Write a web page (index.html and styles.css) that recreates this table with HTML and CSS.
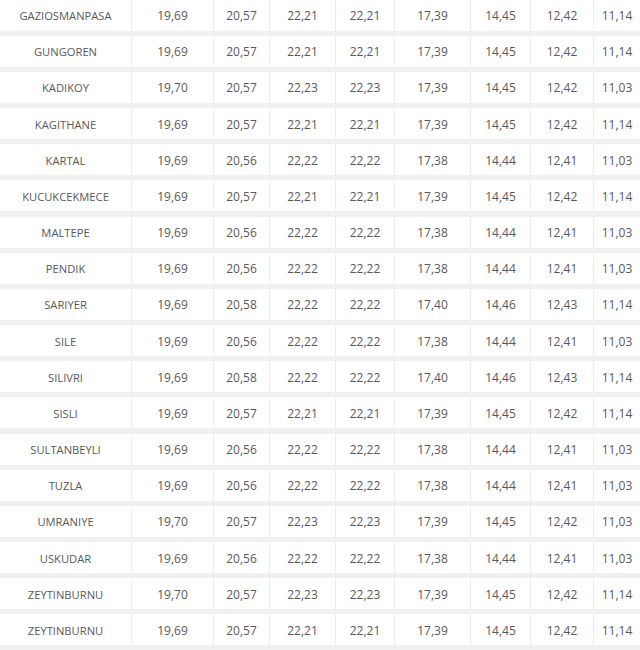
FILE: index.html
```html
<!DOCTYPE html>
<html>
<head>
<meta charset="utf-8">
<link rel="stylesheet" href="styles.css">
</head>
<body>
<div class="prices">
<div class="row"><div class="name">GAZIOSMANPASA</div><div>19,69</div><div>20,57</div><div>22,21</div><div>22,21</div><div>17,39</div><div>14,45</div><div>12,42</div><div>11,14</div></div>
<div class="row"><div class="name">GUNGOREN</div><div>19,69</div><div>20,57</div><div>22,21</div><div>22,21</div><div>17,39</div><div>14,45</div><div>12,42</div><div>11,14</div></div>
<div class="row"><div class="name">KADIKOY</div><div>19,70</div><div>20,57</div><div>22,23</div><div>22,23</div><div>17,39</div><div>14,45</div><div>12,42</div><div>11,03</div></div>
<div class="row"><div class="name">KAGITHANE</div><div>19,69</div><div>20,57</div><div>22,21</div><div>22,21</div><div>17,39</div><div>14,45</div><div>12,42</div><div>11,14</div></div>
<div class="row"><div class="name">KARTAL</div><div>19,69</div><div>20,56</div><div>22,22</div><div>22,22</div><div>17,38</div><div>14,44</div><div>12,41</div><div>11,03</div></div>
<div class="row"><div class="name">KUCUKCEKMECE</div><div>19,69</div><div>20,57</div><div>22,21</div><div>22,21</div><div>17,39</div><div>14,45</div><div>12,42</div><div>11,14</div></div>
<div class="row"><div class="name">MALTEPE</div><div>19,69</div><div>20,56</div><div>22,22</div><div>22,22</div><div>17,38</div><div>14,44</div><div>12,41</div><div>11,03</div></div>
<div class="row"><div class="name">PENDIK</div><div>19,69</div><div>20,56</div><div>22,22</div><div>22,22</div><div>17,38</div><div>14,44</div><div>12,41</div><div>11,03</div></div>
<div class="row"><div class="name">SARIYER</div><div>19,69</div><div>20,58</div><div>22,22</div><div>22,22</div><div>17,40</div><div>14,46</div><div>12,43</div><div>11,14</div></div>
<div class="row"><div class="name">SILE</div><div>19,69</div><div>20,56</div><div>22,22</div><div>22,22</div><div>17,38</div><div>14,44</div><div>12,41</div><div>11,03</div></div>
<div class="row"><div class="name">SILIVRI</div><div>19,69</div><div>20,58</div><div>22,22</div><div>22,22</div><div>17,40</div><div>14,46</div><div>12,43</div><div>11,14</div></div>
<div class="row"><div class="name">SISLI</div><div>19,69</div><div>20,57</div><div>22,21</div><div>22,21</div><div>17,39</div><div>14,45</div><div>12,42</div><div>11,14</div></div>
<div class="row"><div class="name">SULTANBEYLI</div><div>19,69</div><div>20,56</div><div>22,22</div><div>22,22</div><div>17,38</div><div>14,44</div><div>12,41</div><div>11,03</div></div>
<div class="row"><div class="name">TUZLA</div><div>19,69</div><div>20,56</div><div>22,22</div><div>22,22</div><div>17,38</div><div>14,44</div><div>12,41</div><div>11,03</div></div>
<div class="row"><div class="name">UMRANIYE</div><div>19,70</div><div>20,57</div><div>22,23</div><div>22,23</div><div>17,39</div><div>14,45</div><div>12,42</div><div>11,03</div></div>
<div class="row"><div class="name">USKUDAR</div><div>19,69</div><div>20,56</div><div>22,22</div><div>22,22</div><div>17,38</div><div>14,44</div><div>12,41</div><div>11,03</div></div>
<div class="row"><div class="name">ZEYTINBURNU</div><div>19,70</div><div>20,57</div><div>22,23</div><div>22,23</div><div>17,39</div><div>14,45</div><div>12,42</div><div>11,14</div></div>
<div class="row"><div class="name">ZEYTINBURNU</div><div>19,69</div><div>20,57</div><div>22,21</div><div>22,21</div><div>17,39</div><div>14,45</div><div>12,42</div><div>11,14</div></div>
</div>
</body>
</html>
```
FILE: styles.css
```css
html, body {
  margin: 0;
  padding: 0;
  background: #f0f0f0;
  overflow: hidden;
}
.prices {
  width: 640px;
  display: flex;
  flex-direction: column;
  gap: 5.18px;
  margin-top: -0.5px;
  font-family: "Open Sans", "DejaVu Sans", sans-serif;
  font-size: 12px;
  color: #595959;
}
.row {
  display: grid;
  grid-template-columns: 131px 82px 56px 66px 59px 76px 60px 63px 47px;
  height: 31px;
  background: #fff;
  flex: none;
}
.row > div {
  display: flex;
  align-items: center;
  justify-content: center;
  border-left: 1px solid #ededed;
  white-space: nowrap;
  padding-top: 1px;
}
.row > .name {
  border-left: none;
  font-size: 11.2px;
}
```
